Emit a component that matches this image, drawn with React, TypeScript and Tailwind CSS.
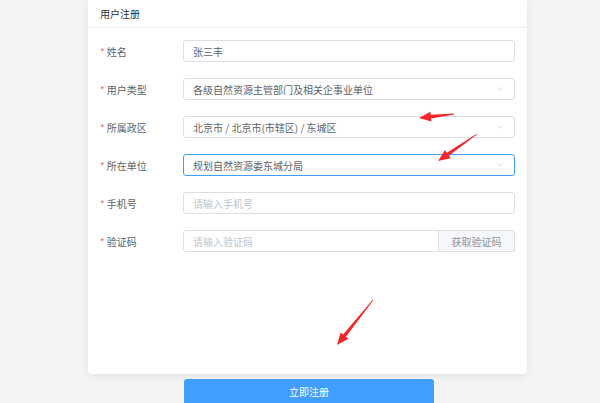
import { ChevronDown } from 'lucide-react';

type Row = {
  label: string;
  value?: string;
  placeholder?: string;
  select?: boolean;
  focused?: boolean;
  captcha?: boolean;
};

const rows: Row[] = [
  { label: '姓名', value: '张三丰' },
  { label: '用户类型', value: '各级自然资源主管部门及相关企事业单位', select: true },
  { label: '所属政区', value: '北京市 / 北京市(市辖区) / 东城区', select: true },
  { label: '所在单位', value: '规划自然资源委东城分局', select: true, focused: true },
  { label: '手机号', placeholder: '请输入手机号' },
  { label: '验证码', placeholder: '请输入验证码', captcha: true },
];

// tapered red annotation arrow from tail (x1,y1) to tip (x2,y2)
function arrowPoints(x1: number, y1: number, x2: number, y2: number) {
  const dx = x2 - x1;
  const dy = y2 - y1;
  const len = Math.hypot(dx, dy);
  const ux = dx / len;
  const uy = dy / len;
  const nx = -uy;
  const ny = ux;
  const head = 12;
  const bx = x2 - ux * head;
  const by = y2 - uy * head;
  const pts = [
    [x1 + nx * 0.4, y1 + ny * 0.4],
    [bx + nx * 1.8, by + ny * 1.8],
    [bx + nx * 5, by + ny * 5],
    [x2, y2],
    [bx - nx * 5, by - ny * 5],
    [bx - nx * 1.8, by - ny * 1.8],
    [x1 - nx * 0.4, y1 - ny * 0.4],
  ];
  return pts.map((p) => p.join(',')).join(' ');
}

export default function App() {
  return (
    <div
      className="relative w-[600px] h-[403px] overflow-hidden bg-[#f4f4f4] text-[10px]"
      style={{ fontFamily: '"Noto Sans CJK SC", "Noto Sans", sans-serif' }}
    >
      {/* Card */}
      <div className="ml-[88px] w-[439px] h-[374px] bg-white rounded-b-[4px] shadow-[0_2px_8px_rgba(0,0,0,0.08)]">
        <div className="h-[28px] pl-[12px] flex items-center border-b border-[#eef0f4] text-[#303133]">
          用户注册
        </div>
        <div className="pt-[12px] flex flex-col gap-[16px]">
          {rows.map((r) => (
            <div key={r.label} className="flex items-center h-[22px]">
              <div className="w-[95px] pl-[12px] flex items-center text-[#606266]">
                <span className="text-[#f56c6c] mr-[2px]">*</span>
                {r.label}
              </div>
              <div className="w-[332px] h-[22px] flex">
                <div
                  className={`flex-1 h-full flex items-center px-[9px] border rounded-[3px] ${
                    r.captcha ? 'rounded-r-none' : ''
                  } ${r.focused ? 'border-[#409eff]' : 'border-[#dcdfe6]'}`}
                >
                  {r.value ? (
                    <span className="flex-1 text-[#606266]">{r.value}</span>
                  ) : (
                    <span className="flex-1 text-[#c0c4cc]">{r.placeholder}</span>
                  )}
                  {r.select && <ChevronDown className="w-[10px] h-[10px] text-[#c0c4cc]" strokeWidth={1.5} />}
                </div>
                {r.captcha && (
                  <div className="w-[76px] h-full flex items-center justify-center bg-[#f5f7fa] border border-l-0 border-[#dcdfe6] rounded-r-[3px] text-[#909399]">
                    获取验证码
                  </div>
                )}
              </div>
            </div>
          ))}
        </div>
      </div>

      {/* Submit */}
      <div className="ml-[184px] mt-[5px] w-[250px] h-[30px] bg-[#409eff] rounded-[3px] text-white flex items-start justify-center pt-[5px]">
        立即注册
      </div>

      {/* Annotation arrows */}
      <svg className="absolute inset-0 pointer-events-none" width="600" height="403">
        <polygon points={arrowPoints(454, 114, 419, 118)} fill="#f2262b" />
        <polygon points={arrowPoints(477, 134, 438, 161)} fill="#f2262b" />
        <polygon points={arrowPoints(373, 300, 337, 345)} fill="#f2262b" />
      </svg>
    </div>
  );
}
